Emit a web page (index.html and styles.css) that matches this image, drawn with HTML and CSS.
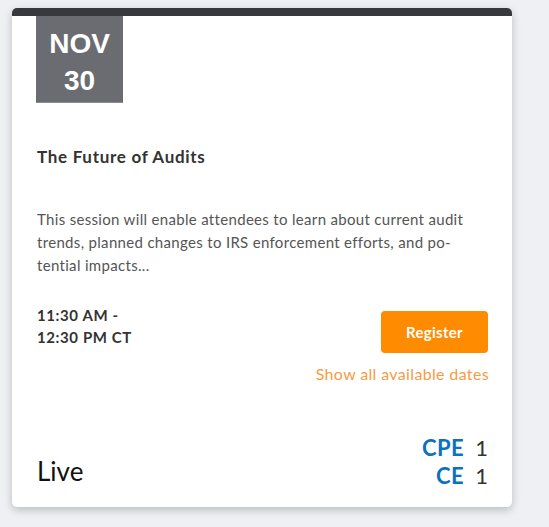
FILE: index.html
```html
<!DOCTYPE html>
<html lang="en">
<head>
<meta charset="utf-8">
<title>The Future of Audits</title>
<link rel="stylesheet" href="styles.css">
</head>
<body>
<div class="card">
  <div class="date">
    <span class="month">NOV</span>
    <span class="day">30</span>
  </div>
  <h2 class="title">The Future of Audits</h2>
  <p class="desc">This session will enable attendees to learn about current audit trends, planned changes to IRS enforcement efforts, and po&shy;tential impacts...</p>
  <div class="actions">
    <div class="time">11:30 AM -<br>12:30 PM CT</div>
    <div class="cta">
      <a class="register" href="#">Register</a>
      <a class="dates" href="#">Show all available dates</a>
    </div>
  </div>
  <div class="footer">
    <div class="format">Live</div>
    <div class="credits">
      <div class="credit"><span class="ctype">CPE</span><span class="cval">1</span></div>
      <div class="credit"><span class="ctype">CE</span><span class="cval">1</span></div>
    </div>
  </div>
</div>
</body>
</html>
```
FILE: styles.css
```css
html, body {
  margin: 0;
  padding: 0;
}
body {
  background: #eff0f4;
  padding: 8px 0 0 12px;
  font-family: Lato, "Noto Sans", sans-serif;
  height: 527px;
  box-sizing: border-box;
}
.card {
  width: 500px;
  height: 499px;
  box-sizing: border-box;
  background: #fff;
  border-top: 8px solid #38393c;
  border-radius: 5px;
  box-shadow: 0 3px 9px rgba(0, 0, 0, 0.22);
  padding: 0 24px 0 24px;
  display: flex;
  flex-direction: column;
}
.date {
  width: 87px;
  height: 87px;
  padding-top: 5px;
  background: #6b6c71;
  color: #fff;
  font-family: "Liberation Sans", Arial, sans-serif;
  font-weight: 700;
  font-size: 28px;
  display: flex;
  flex-direction: column;
  align-items: center;
  justify-content: center;
  line-height: 37px;
  border-bottom: 1px solid #8a8b8f;
  box-sizing: border-box;
}
.title {
  margin: 43px 0 0 1px;
  font-size: 17px;
  line-height: 22px;
  font-weight: 700;
  letter-spacing: 0.7px;
  color: #333;
}
.desc {
  margin: 40px 0 0 1px;
  font-size: 15px;
  line-height: 23px;
  letter-spacing: 0.32px;
  color: #555;
  hyphens: manual;
}
.actions {
  margin-top: 27px;
  display: flex;
  justify-content: space-between;
  align-items: flex-start;
}
.time {
  margin: 0 0 0 1px;
  font-size: 15px;
  line-height: 22px;
  font-weight: 700;
  letter-spacing: 0.6px;
  color: #333;
}
.cta {
  display: flex;
  flex-direction: column;
  align-items: flex-end;
}
.register {
  width: 107px;
  height: 42px;
  margin-top: 7px;
  box-sizing: border-box;
  background: #ff8b00;
  border-radius: 4px;
  color: #fff;
  font-weight: 700;
  font-size: 15px;
  letter-spacing: 0.3px;
  text-decoration: none;
  display: flex;
  align-items: center;
  justify-content: center;
}
.dates {
  margin-top: 11px;
  margin-right: -1px;
  color: #f99a45;
  font-size: 16px;
  line-height: 20px;
  letter-spacing: 0.35px;
  text-decoration: none;
}
.footer {
  margin-top: auto;
  margin-bottom: 17px;
  display: flex;
  justify-content: space-between;
  align-items: flex-end;
}
.format {
  font-size: 26px;
  line-height: 28px;
  color: #111;
  margin: 0 0 5px 1px;
}
.credits {
  display: flex;
  flex-direction: column;
  align-items: flex-end;
}
.credit {
  font-size: 22px;
  line-height: 28px;
}
.ctype {
  color: #0b72bd;
  font-weight: 700;
  letter-spacing: 0.5px;
  margin-right: 11px;
}
.cval {
  color: #333;
}
```
